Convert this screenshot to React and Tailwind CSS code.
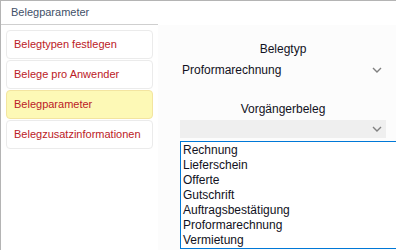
import React from "react";

const font = { fontFamily: '"Liberation Sans", Arial, sans-serif' };

function Chevron() {
  return (
    <svg width="10" height="6" viewBox="0 0 10 6" className="shrink-0">
      <path d="M1 1 L5 5 L9 1" fill="none" stroke="#808080" strokeWidth="1.4" />
    </svg>
  );
}

export default function App() {
  const navItems = [
    "Belegtypen festlegen",
    "Belege pro Anwender",
    "Belegparameter",
    "Belegzusatzinformationen",
  ];
  const options = [
    "Rechnung",
    "Lieferschein",
    "Offerte",
    "Gutschrift",
    "Auftragsbestätigung",
    "Proformarechnung",
    "Vermietung",
  ];

  return (
    <div
      className="w-[396px] h-[250px] overflow-hidden bg-white border-t border-l border-[#b4b4b4] flex"
      style={font}
    >
      {/* left panel */}
      <div className="w-[157px] flex flex-col shrink-0">
        <div className="h-[24px] border-b border-[#cfcfcf] pl-[10px] flex items-center text-[11px] text-[#3f5068]">
          Belegparameter
        </div>
        <div className="flex flex-col gap-[1px] pl-[5px] pr-[5px] pt-[5px]">
          {navItems.map((item, i) => (
            <div
              key={item}
              className={
                "h-[29px] rounded-[4px] border flex items-center pl-[7px] text-[11px] text-[#bb2026] " +
                (i === 2
                  ? "bg-[#fdf9b6] border-[#f3e5a0]"
                  : "bg-white border-[#ebebeb]")
              }
            >
              {item}
            </div>
          ))}
        </div>
      </div>

      {/* right panel */}
      <div className="flex-1 flex flex-col">
        <div className="h-[24px] shrink-0 bg-white" />
        <div className="flex-1 bg-[#fcfcfc] pl-[22px] pr-[10px] pt-[15px] text-[12px] text-[#111122]">
          <div className="text-center h-[18px] leading-[18px]">Belegtyp</div>
          <div className="h-[20px] mt-[2px] flex items-center justify-between pl-[2px] pr-[4px]">
            <span>Proformarechnung</span>
            <Chevron />
          </div>
          <div className="text-center h-[18px] leading-[18px] mt-[20px]">Vorgängerbeleg</div>
          <div className="h-[18px] mt-[2px] bg-[#efefef] flex items-center justify-end pr-[4px]">
            <Chevron />
          </div>
          <div className="mt-[3px] -mr-[20px] h-[108px] overflow-hidden border border-[#0078d7] bg-white pl-[2px] pt-[1px] leading-[15px]">
            {options.map((o) => (
              <div key={o} className="h-[15px]">
                {o}
              </div>
            ))}
          </div>
        </div>
      </div>
    </div>
  );
}
